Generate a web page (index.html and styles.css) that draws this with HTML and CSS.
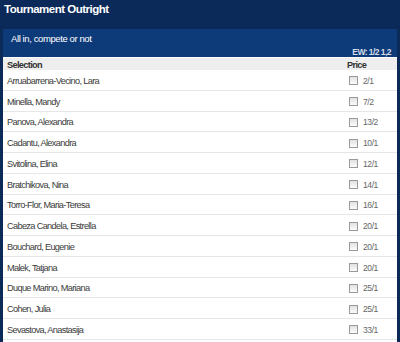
FILE: index.html
```html
<!DOCTYPE html>
<html>
<head>
<meta charset="utf-8">
<link rel="stylesheet" href="styles.css">
</head>
<body>
<div class="widget">
  <div class="title">Tournament Outright</div>
  <div class="market">
    <div class="market-name">All in, compete or not</div>
    <div class="ew">EW: 1/2 1,2</div>
  </div>
  <div class="list">
    <div class="row head"><span class="sel">Selection</span><span class="price">Price</span></div>
    <div class="row"><span class="sel">Arruabarrena-Vecino, Lara</span><span class="price"><i class="box"></i>2/1</span></div>
    <div class="row"><span class="sel">Minella, Mandy</span><span class="price"><i class="box"></i>7/2</span></div>
    <div class="row"><span class="sel">Panova, Alexandra</span><span class="price"><i class="box"></i>13/2</span></div>
    <div class="row"><span class="sel">Cadantu, Alexandra</span><span class="price"><i class="box"></i>10/1</span></div>
    <div class="row"><span class="sel">Svitolina, Elina</span><span class="price"><i class="box"></i>12/1</span></div>
    <div class="row"><span class="sel">Bratchikova, Nina</span><span class="price"><i class="box"></i>14/1</span></div>
    <div class="row"><span class="sel">Torro-Flor, Maria-Teresa</span><span class="price"><i class="box"></i>16/1</span></div>
    <div class="row"><span class="sel">Cabeza Candela, Estrella</span><span class="price"><i class="box"></i>20/1</span></div>
    <div class="row"><span class="sel">Bouchard, Eugenie</span><span class="price"><i class="box"></i>20/1</span></div>
    <div class="row"><span class="sel">Malek, Tatjana</span><span class="price"><i class="box"></i>20/1</span></div>
    <div class="row"><span class="sel">Duque Marino, Mariana</span><span class="price"><i class="box"></i>25/1</span></div>
    <div class="row"><span class="sel">Cohen, Julia</span><span class="price"><i class="box"></i>25/1</span></div>
    <div class="row"><span class="sel">Sevastova, Anastasija</span><span class="price"><i class="box"></i>33/1</span></div>
  </div>
</div>
</body>
</html>
```
FILE: styles.css
```css
html, body {
  margin: 0;
  padding: 0;
  background: #ffffff;
}
body {
  font-family: "Liberation Sans", Arial, sans-serif;
  color: #333333;
  height: 342px;
  overflow: hidden;
}
.widget {
  width: 400px;
  box-sizing: border-box;
  border-left: 3px solid #0c2a57;
  border-right: 3px solid #0c2a57;
  min-height: 342px;
}
.title {
  background: #0b2a59;
  height: 29px;
  margin: 0 -3px;
  padding-left: 4px;
  box-sizing: border-box;
  color: #ffffff;
  font-weight: bold;
  font-size: 11.5px;
  letter-spacing: -0.5px;
  line-height: 18px;
}
.market {
  background: #0d3b79;
  height: 28px;
  display: flex;
  flex-direction: column;
  box-sizing: border-box;
  padding: 3px 6px 0 8px;
}
.market-name {
  color: #ffffff;
  font-size: 9.5px;
  letter-spacing: -0.4px;
  line-height: 14px;
}
.ew {
  color: #d4dcea;
  font-size: 8.5px;
  font-weight: bold;
  letter-spacing: -0.55px;
  text-align: right;
  line-height: 10px;
  margin-top: auto;
}
.list {
  display: flex;
  flex-direction: column;
}
.row {
  display: grid;
  grid-template-columns: 1fr 50px;
  align-items: center;
  height: 20.75px;
  box-sizing: border-box;
  border-bottom: 1px solid #e6e6e6;
  padding: 2px 0 0 4px;
  font-size: 9.2px;
  letter-spacing: -0.65px;
  color: #3a3a3a;
}
.row.head {
  height: 13px;
  padding-top: 1px;
  background: #eeeeee;
  border-bottom: 0;
  border-top: 1px solid #ffffff;
  font-weight: bold;
  color: #333333;
}
.price {
  display: flex;
  align-items: center;
  color: #666666;
  font-size: 8.5px;
  letter-spacing: -0.4px;
}
.head .price {
  color: #333333;
  font-size: 9.2px;
  letter-spacing: -0.65px;
}
.box {
  display: inline-block;
  width: 9px;
  height: 9px;
  box-sizing: border-box;
  border: 1px solid #9a9a9a;
  background: linear-gradient(#e2e2e2, #fbfbfb);
  margin: 0 5px 0 2px;
}
```
